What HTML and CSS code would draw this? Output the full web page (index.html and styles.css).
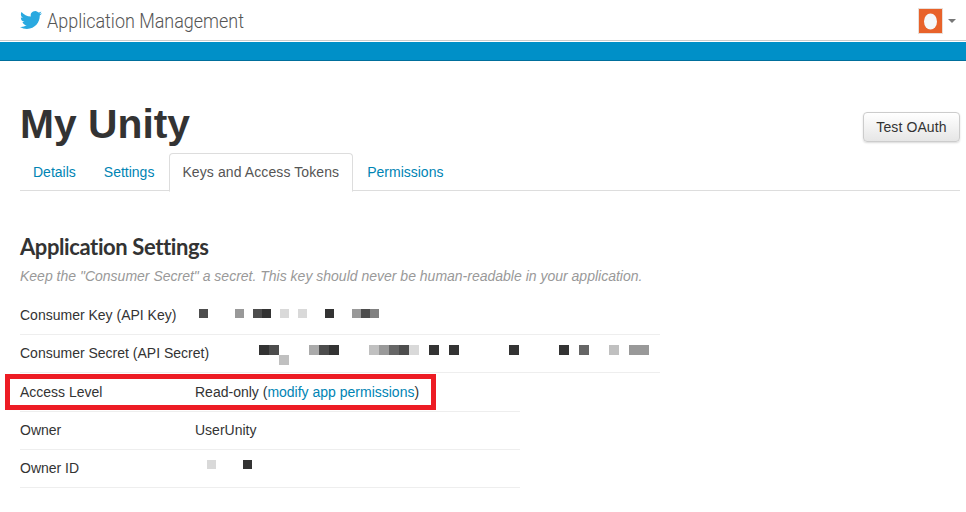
FILE: index.html
```html
<!DOCTYPE html>
<html lang="en">
<head>
  <meta charset="UTF-8">
  <title>Application Management</title>
  <link rel="stylesheet" href="styles.css">
</head>
<body>
  <header class="topbar">
    <a href="#" class="brand">
      <svg class="bird" viewBox="0 0 24 24"><path d="M23.953 4.57a10 10 0 01-2.825.775 4.958 4.958 0 002.163-2.723c-.951.555-2.005.959-3.127 1.184a4.92 4.92 0 00-8.384 4.482C7.69 8.095 4.067 6.13 1.64 3.162a4.822 4.822 0 00-.666 2.475c0 1.71.87 3.213 2.188 4.096a4.904 4.904 0 01-2.228-.616v.06a4.923 4.923 0 003.946 4.827 4.996 4.996 0 01-2.212.085 4.936 4.936 0 004.604 3.417 9.867 9.867 0 01-6.102 2.105c-.39 0-.779-.023-1.17-.067a13.995 13.995 0 007.557 2.209c9.053 0 13.998-7.496 13.998-13.985 0-.21 0-.42-.015-.63A9.935 9.935 0 0024 4.59z"/></svg>
      <span class="brand-name">Application Management</span>
    </a>
    <div class="account">
      <svg class="avatar" viewBox="0 0 25 26"><rect x="0.5" y="0.5" width="24" height="25" fill="#e8622a" stroke="#eadfd8"/><ellipse cx="12.5" cy="13.5" rx="6.5" ry="8" fill="#f5f8fa"/></svg>
      <span class="caret"></span>
    </div>
  </header>
  <div class="band"></div>

  <main class="content">
    <div class="title-row">
      <h1>My Unity</h1>
      <button>Test OAuth</button>
    </div>

    <ul class="tabs">
      <li><a href="#">Details</a></li>
      <li><a href="#">Settings</a></li>
      <li class="active"><a href="#">Keys and Access Tokens</a></li>
      <li><a href="#">Permissions</a></li>
    </ul>

    <h2>Application Settings</h2>
    <p class="hint">Keep the "Consumer Secret" a secret. This key should never be human-readable in your application.</p>

    <div class="rows rows-wide">
      <div class="row">
        <span class="label">Consumer Key (API Key)</span>
        <svg class="redact" width="460" height="37" viewBox="195 297 460 37">
          <rect x="199" y="309" width="9" height="9" fill="#4d4d4d"/>
          <rect x="235" y="309" width="9" height="9" fill="#999"/>
          <rect x="253" y="309" width="9" height="9" fill="#4d4d4d"/>
          <rect x="262" y="309" width="9" height="9" fill="#333"/>
          <rect x="280" y="309" width="9" height="9" fill="#d9d9d9"/>
          <rect x="298" y="309" width="9" height="9" fill="#d9d9d9"/>
          <rect x="325" y="309" width="9" height="9" fill="#333"/>
          <rect x="352" y="309" width="9" height="9" fill="#999"/>
          <rect x="361" y="309" width="9" height="9" fill="#4d4d4d"/>
          <rect x="370" y="309" width="9" height="9" fill="#808080"/>
        </svg>
      </div>
      <div class="row">
        <span class="label">Consumer Secret (API Secret)</span>
        <svg class="redact" width="460" height="37" viewBox="195 335 460 37">
          <rect x="259" y="345" width="10" height="10" fill="#333"/>
          <rect x="269" y="345" width="10" height="10" fill="#4d4d4d"/>
          <rect x="279" y="355" width="10" height="10" fill="#c0c0c0"/>
          <rect x="309" y="345" width="10" height="10" fill="#aaa"/>
          <rect x="319" y="345" width="10" height="10" fill="#4d4d4d"/>
          <rect x="329" y="345" width="10" height="10" fill="#333"/>
          <rect x="369" y="345" width="10" height="10" fill="#c0c0c0"/>
          <rect x="379" y="345" width="10" height="10" fill="#999"/>
          <rect x="389" y="345" width="10" height="10" fill="#666"/>
          <rect x="399" y="345" width="10" height="10" fill="#4d4d4d"/>
          <rect x="409" y="345" width="10" height="10" fill="#d9d9d9"/>
          <rect x="429" y="345" width="10" height="10" fill="#333"/>
          <rect x="449" y="345" width="10" height="10" fill="#333"/>
          <rect x="509" y="345" width="10" height="10" fill="#333"/>
          <rect x="559" y="345" width="10" height="10" fill="#333"/>
          <rect x="579" y="345" width="10" height="10" fill="#666"/>
          <rect x="609" y="345" width="10" height="10" fill="#c0c0c0"/>
          <rect x="629" y="345" width="20" height="10" fill="#999"/>
        </svg>
      </div>
    </div>

    <div class="rows rows-narrow">
      <div class="row highlighted">
        <span class="label">Access Level</span>
        <span>Read-only (<a href="#">modify app permissions</a>)</span>
      </div>
      <div class="row">
        <span class="label">Owner</span>
        <span>UserUnity</span>
      </div>
      <div class="row">
        <span class="label">Owner ID</span>
        <svg class="redact" width="60" height="37" viewBox="195 450 60 37">
          <rect x="207" y="460" width="9" height="9" fill="#d9d9d9"/>
          <rect x="243" y="460" width="9" height="9" fill="#333"/>
        </svg>
      </div>
    </div>
  </main>
</body>
</html>
```

FILE: styles.css
```css
body {
  margin: 0;
  font-family: "Liberation Sans", Arial, sans-serif;
  font-size: 14px;
  color: #333;
  background-color: #fff;
}

a {
  color: #0084b4;
  text-decoration: none;
}

.topbar {
  height: 40px;
  display: flex;
  justify-content: space-between;
  align-items: center;
  padding: 0 10px 0 20px;
  background-color: #fff;
  border-bottom: 1px solid #ccc;
}

.brand {
  display: flex;
  align-items: center;
  gap: 5px;
  color: #555;
  font-family: Roboto, sans-serif;
  font-size: 21px;
  font-weight: 300;
}

/* the original wordmark font is narrower than anything installed */
.brand-name {
  display: inline-block;
  margin-top: 2px;
  transform: scaleX(0.855);
  transform-origin: left center;
}

.bird {
  width: 22px;
  height: 22px;
  fill: #2aa9e0;
  margin-bottom: 1px;
}

.account {
  display: flex;
  align-items: center;
  gap: 5px;
  margin-top: 2px;
}

.avatar {
  width: 25px;
  height: 26px;
}

.caret {
  width: 0;
  height: 0;
  border-top: 4px solid #777;
  border-left: 4px solid transparent;
  border-right: 4px solid transparent;
}

.band {
  height: 18px;
  margin-top: 1px;
  background-color: #0090c8;
  border-bottom: 1px solid #006f9c;
}

.content {
  padding: 0 6px 0 20px;
}

.title-row {
  display: flex;
  justify-content: space-between;
  align-items: flex-start;
  height: 92px;
}

h1 {
  margin: 40px 0 0;
  font-size: 40.8px;
  line-height: 46px;
  font-weight: bold;
}

button {
  margin-top: 51px;
  width: 97px;
  height: 30px;
  padding: 0;
  font-family: inherit;
  font-size: 14px;
  letter-spacing: 0.1px;
  color: #333;
  background: linear-gradient(#fff, #e6e6e6);
  border: 1px solid #ccc;
  border-radius: 4px;
  box-shadow: 0 1px 2px rgba(0, 0, 0, 0.15);
}

.tabs {
  list-style: none;
  margin: 0;
  padding: 0;
  display: flex;
  gap: 2px;
  height: 37px;
  border-bottom: 1px solid #ddd;
}

.tabs a {
  display: block;
  height: 17px;
  padding: 10px 12px;
  line-height: 17px;
  border: 1px solid transparent;
  border-radius: 4px 4px 0 0;
}

.tabs .active {
  margin-right: -1px;
}

.tabs .active a {
  padding-right: 13px;
  color: #555;
  background-color: #fff;
  border-color: #ddd #ddd #fff;
  letter-spacing: 0.1px;
}

h2 {
  margin: 43px 0 0;
  font-family: Lato, sans-serif;
  font-size: 22px;
  line-height: 26px;
  font-weight: 700;
  letter-spacing: -0.4px;
}

.hint {
  margin: 6px 0 0;
  line-height: 20px;
  font-style: italic;
  color: #999;
}

.rows-wide {
  width: 640px;
  margin-top: 11px;
}

.rows-narrow {
  width: 500px;
  margin-top: 1px;
}

.row {
  display: flex;
  align-items: center;
  position: relative;
  box-sizing: border-box;
  height: 38px;
  padding-bottom: 2px;
  border-bottom: 1px solid #eee;
}

.label {
  width: 175px;
  flex-shrink: 0;
  white-space: nowrap;
}

.redact {
  display: block;
  flex-shrink: 0;
  align-self: flex-start;
}

.highlighted::before {
  content: "";
  position: absolute;
  left: -15px;
  top: 0;
  width: 421px;
  height: 26px;
  border: 5px solid #ed1c24;
}
```
